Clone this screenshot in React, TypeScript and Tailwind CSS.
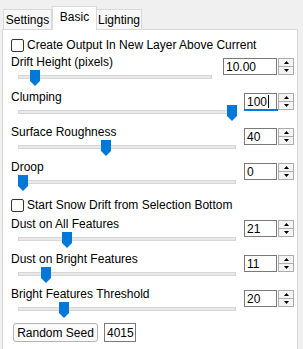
import React from 'react';

const font = { fontFamily: '"Liberation Sans", Arial, sans-serif' };

type SliderRow = {
  label: string;
  value: string;
  thumb: number;
  wide?: boolean;
  focused?: boolean;
};

const topRows: SliderRow[] = [
  { label: 'Drift Height (pixels)', value: '10.00', thumb: 12, wide: true },
  { label: 'Clumping', value: '100', thumb: 209, focused: true },
  { label: 'Surface Roughness', value: '40', thumb: 83 },
  { label: 'Droop', value: '0', thumb: 0 },
];

const bottomRows: SliderRow[] = [
  { label: 'Dust on All Features', value: '21', thumb: 44 },
  { label: 'Dust on Bright Features', value: '11', thumb: 23 },
  { label: 'Bright Features Threshold', value: '20', thumb: 41 },
];

function Checkbox({ label }: { label: string }) {
  return (
    <div className="flex h-[18px] items-center gap-[3px]">
      <span className="box-border h-[13px] w-[13px] rounded-[2px] border border-[#333] bg-white" />
      <span className="text-[12px] leading-[16px] text-black">{label}</span>
    </div>
  );
}

function Thumb() {
  return (
    <svg width="10" height="16" viewBox="0 0 10 16">
      <path d="M0 0 H10 V11 L5 16 L0 11 Z" fill="#0078d7" />
    </svg>
  );
}

function SpinBox({ value, wide, focused }: { value: string; wide?: boolean; focused?: boolean }) {
  return (
    <div className="flex h-[17px]">
      <div
        className={`relative box-border flex h-[17px] items-center border border-[#7a7a7a] bg-white pl-[2px] text-[12px] text-black ${
          wide ? 'w-[54px]' : 'w-[33px]'
        }`}
      >
        {value}
        {focused && <span className="ml-px h-[13px] w-px bg-black" />}
        {focused && <span className="absolute -bottom-[2px] -left-px -right-[2px] h-[2px] bg-[#0078d7]" />}
      </div>
      <div className="ml-px flex w-[16px] flex-col">
        <div className="box-border flex h-[9px] items-center justify-center border border-[#adadad] bg-[#f4f4f4]">
          <svg width="5" height="3" viewBox="0 0 5 3">
            <path d="M2.5 0 L5 3 H0 Z" fill="#000" />
          </svg>
        </div>
        <div className="box-border flex h-[8px] items-center justify-center border border-t-0 border-[#adadad] bg-[#f4f4f4]">
          <svg width="5" height="3" viewBox="0 0 5 3">
            <path d="M0 0 H5 L2.5 3 Z" fill="#000" />
          </svg>
        </div>
      </div>
    </div>
  );
}

function Slider({ row }: { row: SliderRow }) {
  return (
    <div className="flex h-[35px]">
      <div className="flex flex-1 flex-col">
        <div className="h-[16px] text-[12px] leading-[16px] text-black">{row.label}</div>
        <div className="relative ml-[7px] h-[16px]">
          <div
            className={`absolute top-[5px] box-border h-[4px] border border-[#d6d6d6] bg-[#e9e9e9] ${
              row.wide ? 'w-[194px]' : 'w-[218px]'
            }`}
          />
          <div className="absolute top-0" style={{ left: row.thumb }}>
            <Thumb />
          </div>
        </div>
      </div>
      <div className="mt-[4px]">
        <SpinBox value={row.value} wide={row.wide} focused={row.focused} />
      </div>
    </div>
  );
}

export default function App() {
  return (
    <div className="h-[349px] w-[303px] overflow-hidden bg-[#f0f0f0] pl-[2px] pt-[6px]" style={font}>
      <div className="flex h-[23px] items-end pl-px text-[12px] text-black">
        <div className="box-border flex h-[20px] w-[49px] items-center justify-center border border-b-0 border-[#d9d9d9] bg-[#f7f7f7]">
          Settings
        </div>
        <div className="relative z-10 -mb-px box-border flex h-[24px] w-[45px] items-center justify-center border border-b-0 border-[#d9d9d9] bg-white pb-[3px]">
          Basic
        </div>
        <div className="box-border flex h-[20px] w-[45px] items-center justify-center border border-b-0 border-l-0 border-[#d9d9d9] bg-[#f7f7f7]">
          Lighting
        </div>
      </div>
      <div className="box-border h-[340px] w-[296px] border border-[#d9d9d9] bg-white pl-[8px] pr-[3px] pt-[6px]">
        <Checkbox label="Create Output In New Layer Above Current" />
        {topRows.map((r) => (
          <Slider key={r.label} row={r} />
        ))}
        <div className="flex h-[22px] items-center">
          <Checkbox label="Start Snow Drift from Selection Bottom" />
        </div>
        {bottomRows.map((r) => (
          <Slider key={r.label} row={r} />
        ))}
        <div className="mt-[2px] flex items-center gap-[6px] pl-[2px]">
          <div className="box-border flex h-[19px] w-[85px] items-center justify-center rounded-[3px] border border-[#b4b4b4] bg-[#fafafa] text-[12px] text-black">
            Random Seed
          </div>
          <div className="box-border flex h-[19px] w-[32px] items-center border border-[#7a7a7a] bg-white pl-[2px] text-[12px] text-black">
            4015
          </div>
        </div>
      </div>
    </div>
  );
}
